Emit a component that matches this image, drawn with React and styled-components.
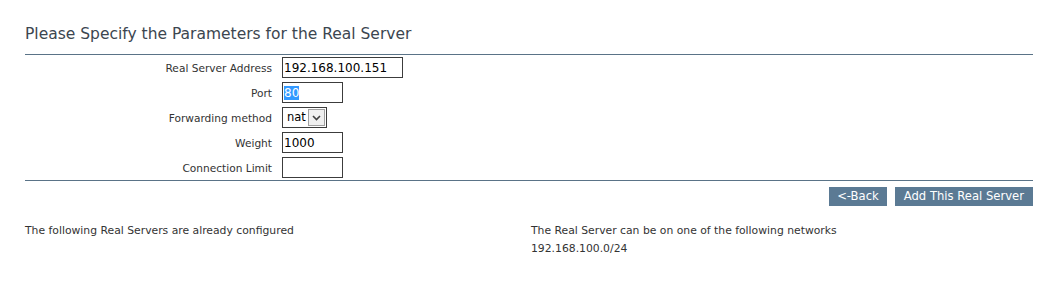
import React, { useEffect, useRef } from "react";
import styled, { createGlobalStyle } from "styled-components";

const Global = createGlobalStyle`
  html, body { margin: 0; padding: 0; background: #fff; }
  body { font-family: "DejaVu Sans", Verdana, sans-serif; color: #333; }
  ::selection { background: #3399ff; color: #fff; }
`;

const Page = styled.div`
  margin: 0 15px 0 25px;
  padding-top: 24px;
`;

const Title = styled.h2`
  margin: 0;
  font-family: "DejaVu Sans", sans-serif;
  font-weight: normal;
  font-size: 15.5px;
  line-height: 20px;
  color: #3c4650;
  padding-bottom: 10px;
  border-bottom: 1px solid #5a7387;
`;

const Form = styled.div`
  display: grid;
  grid-template-columns: 247px auto;
  column-gap: 10px;
  row-gap: 4px;
  padding: 2px 0 2px;
  border-bottom: 1px solid #5a7387;
  align-items: center;
`;

const Label = styled.label`
  text-align: right;
  font-size: 10.6px;
  color: #333;
`;

const Field = styled.div`
  display: flex;
  align-items: center;
`;

const TextInput = styled.input`
  box-sizing: border-box;
  width: ${(p) => p.$w}px;
  height: 21px;
  border: 1px solid #3c3c3c;
  padding: 0 1px;
  margin: 0;
  font-family: "DejaVu Sans", sans-serif;
  font-size: 12px;
  color: #000;
  outline: none;
  background: #fff;
`;

const Select = styled.div`
  box-sizing: border-box;
  width: 45px;
  height: 21px;
  border: 1px solid #3c3c3c;
  display: flex;
  align-items: stretch;
  font-family: "DejaVu Sans", sans-serif;
  font-size: 11.5px;
  color: #000;
`;

const SelectText = styled.span`
  flex: 1;
  padding-left: 4px;
  line-height: 19px;
`;

const ArrowBox = styled.span`
  box-sizing: border-box;
  flex: 0 0 17px;
  margin: 1px;
  border: 1px solid #a0a0a0;
  background: #f0f0f0;
  display: flex;
  align-items: center;
  justify-content: center;
`;

const Actions = styled.div`
  display: flex;
  justify-content: flex-end;
  gap: 8px;
  padding-top: 6px;
`;

const Button = styled.button`
  height: 19px;
  padding: 0 ${(p) => (p.$tight ? 8 : 9)}px;
  border: none;
  background: #5b7a94;
  color: #fff;
  font-family: "DejaVu Sans", sans-serif;
  font-size: 11.6px;
  line-height: 19px;
  cursor: pointer;
`;

const Info = styled.div`
  display: grid;
  grid-template-columns: 506px 1fr;
  padding-top: 16px;
  font-size: 10.8px;
  line-height: 18px;
  color: #333;
`;

const Column = styled.div``;

export default function App() {
  const portRef = useRef(null);
  useEffect(() => {
    if (portRef.current) {
      portRef.current.focus();
      portRef.current.select();
    }
  }, []);
  return (
    <>
      <Global />
      <Page>
        <Title>Please Specify the Parameters for the Real Server</Title>
        <Form>
          <Label>Real Server Address</Label>
          <Field>
            <TextInput $w={121} defaultValue="192.168.100.151" />
          </Field>
          <Label>Port</Label>
          <Field>
            <TextInput $w={61} defaultValue="80" ref={portRef} />
          </Field>
          <Label>Forwarding method</Label>
          <Field>
            <Select>
              <SelectText>nat</SelectText>
              <ArrowBox>
                <svg width="9" height="6" viewBox="0 0 9 6">
                  <path d="M1 1 L4.5 4.5 L8 1" fill="none" stroke="#404040" strokeWidth="1.6" />
                </svg>
              </ArrowBox>
            </Select>
          </Field>
          <Label>Weight</Label>
          <Field>
            <TextInput $w={61} defaultValue="1000" />
          </Field>
          <Label>Connection Limit</Label>
          <Field>
            <TextInput $w={61} defaultValue="" />
          </Field>
        </Form>
        <Actions>
          <Button $tight>&lt;-Back</Button>
          <Button>Add This Real Server</Button>
        </Actions>
        <Info>
          <Column>The following Real Servers are already configured</Column>
          <Column>
            The Real Server can be on one of the following networks
            <br />
            192.168.100.0/24
          </Column>
        </Info>
      </Page>
    </>
  );
}
